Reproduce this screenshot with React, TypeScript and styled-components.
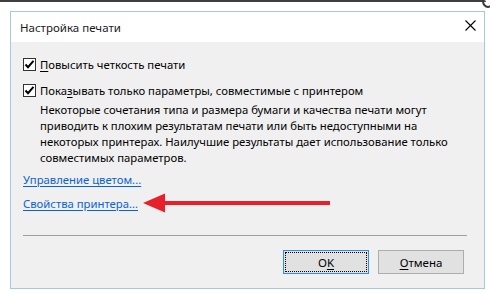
import React from "react";
import styled, { createGlobalStyle } from "styled-components";

const Global = createGlobalStyle`
  html, body { margin: 0; padding: 0; background: #ffffff; }
  body { font-family: "Noto Sans", "Open Sans", "DejaVu Sans", sans-serif; font-size: 11.3px; color: #000; }
  * { box-sizing: border-box; }
`;

const Page = styled.div`
  width: 490px;
  height: 294px;
  position: relative;
  overflow: hidden;
  background: #fff;
`;

const BackWindowEdge = styled.div`
  height: 2px;
  width: 486px;
  background: #3f3f3f;
  border-top-right-radius: 6px;
`;

const CornerMark = styled.div`
  position: absolute;
  right: -4px;
  top: -6px;
  width: 12px;
  height: 14px;
  border: 2px solid #3a3a3a;
  border-radius: 50%;
`;

const Dialog = styled.div`
  margin: 9px 0 0 10px;
  width: 475px;
  height: 278px;
  border: 1px solid #a8c6e6;
  background: #f0f0f0;
  display: flex;
  flex-direction: column;
`;

const TitleBar = styled.div`
  height: 30px;
  background: #fff;
  display: flex;
  align-items: center;
  justify-content: space-between;
  padding: 0 7px 0 9px;
`;

const Title = styled.span`
  font-size: 11.5px;
  color: #1a1a1a;
  margin-top: 1px;
`;

const Close = styled.div`
  width: 14px;
  height: 14px;
  display: flex;
  align-items: center;
  justify-content: center;
  margin-top: -3px;
`;

const Body = styled.div`
  flex: 1;
  padding: 15px 0 0 12px;
  display: flex;
  flex-direction: column;
`;

const CheckRow = styled.div<{ $gap: number }>`
  display: flex;
  align-items: center;
  gap: 4px;
  height: 14px;
  margin-bottom: ${(p) => p.$gap}px;
`;

const Box = styled.div`
  width: 13px;
  height: 13px;
  border: 1px solid #333;
  background: #fff;
  display: flex;
  align-items: center;
  justify-content: center;
`;

const Label = styled.span`
  white-space: nowrap;
`;

const U = styled.span`
  text-decoration: underline;
  text-underline-offset: 2px;
`;

const Description = styled.p`
  margin: 5px 0 0 17px;
  line-height: 16px;
  width: 320px;
  white-space: nowrap;
`;

const Link = styled.a`
  color: #0b63d0;
  text-decoration: underline;
  text-underline-offset: 2px;
  white-space: nowrap;
  cursor: pointer;
`;

const LinkRow = styled.div<{ $top: number }>`
  margin-top: ${(p) => p.$top}px;
  height: 16px;
  display: flex;
  align-items: center;
`;

const Arrow = styled.svg`
  margin-left: 5px;
  flex: none;
`;

const Separator = styled.div`
  margin: 0 17px 0 0;
  height: 1px;
  background: #a0a0a0;
`;

const Footer = styled.div`
  height: 52px;
  display: flex;
  justify-content: flex-end;
  align-items: flex-start;
  gap: 9px;
  padding: 14px 20px 0 0;
`;

const Button = styled.button<{ $focused?: boolean }>`
  width: 86px;
  height: 24px;
  font-family: inherit;
  font-size: 11.5px;
  color: #000;
  background: #e1e1e1;
  border: 1px solid ${(p) => (p.$focused ? "#2b8fe8" : "#adadad")};
  padding: 0;
  position: relative;
  display: flex;
  align-items: center;
  justify-content: center;
  &::after {
    content: "";
    position: absolute;
    inset: 1px;
    border: 1px dotted #000;
    display: ${(p) => (p.$focused ? "block" : "none")};
  }
`;

const Check = () => (
  <svg width="11" height="11" viewBox="0 0 11 11">
    <path d="M1.5 5.5 L4 8.2 L9.5 1.8" fill="none" stroke="#000" strokeWidth="2" />
  </svg>
);

export default function App() {
  return (
    <Page>
      <Global />
      <BackWindowEdge />
      <CornerMark />
      <Dialog>
        <TitleBar>
          <Title>Настройка печати</Title>
          <Close>
            <svg width="11" height="11" viewBox="0 0 11 11">
              <path d="M0.5 0.5 L10.5 10.5 M10.5 0.5 L0.5 10.5" stroke="#000" strokeWidth="1.1" />
            </svg>
          </Close>
        </TitleBar>
        <Body>
          <CheckRow $gap={12}>
            <Box><Check /></Box>
            <Label><U>П</U>овысить четкость печати</Label>
          </CheckRow>
          <CheckRow $gap={0}>
            <Box><Check /></Box>
            <Label>Пока<U>з</U>ывать только параметры, совместимые с принтером</Label>
          </CheckRow>
          <Description>
            Некоторые сочетания типа и размера бумаги и качества печати могут
            <br />
            приводить к плохим результатам печати или быть недоступными на
            <br />
            некоторых принтерах. Наилучшие результаты дает использование только
            <br />
            совместимых параметров.
          </Description>
          <LinkRow $top={5}>
            <Link>Управление цветом...</Link>
          </LinkRow>
          <LinkRow $top={8}>
            <Link>Свойства принтера...</Link>
            <Arrow width="187" height="20" viewBox="0 0 187 20">
              <path d="M0 10 L22 0.5 L22 19.5 Z" fill="#e8202a" />
              <rect x="20" y="8" width="167" height="4" fill="#e8202a" />
            </Arrow>
          </LinkRow>
          <div style={{ flex: 1 }} />
          <Separator />
          <Footer>
            <Button $focused>
              O<U>K</U>
            </Button>
            <Button>
              <U>О</U>тмена
            </Button>
          </Footer>
        </Body>
      </Dialog>
    </Page>
  );
}
